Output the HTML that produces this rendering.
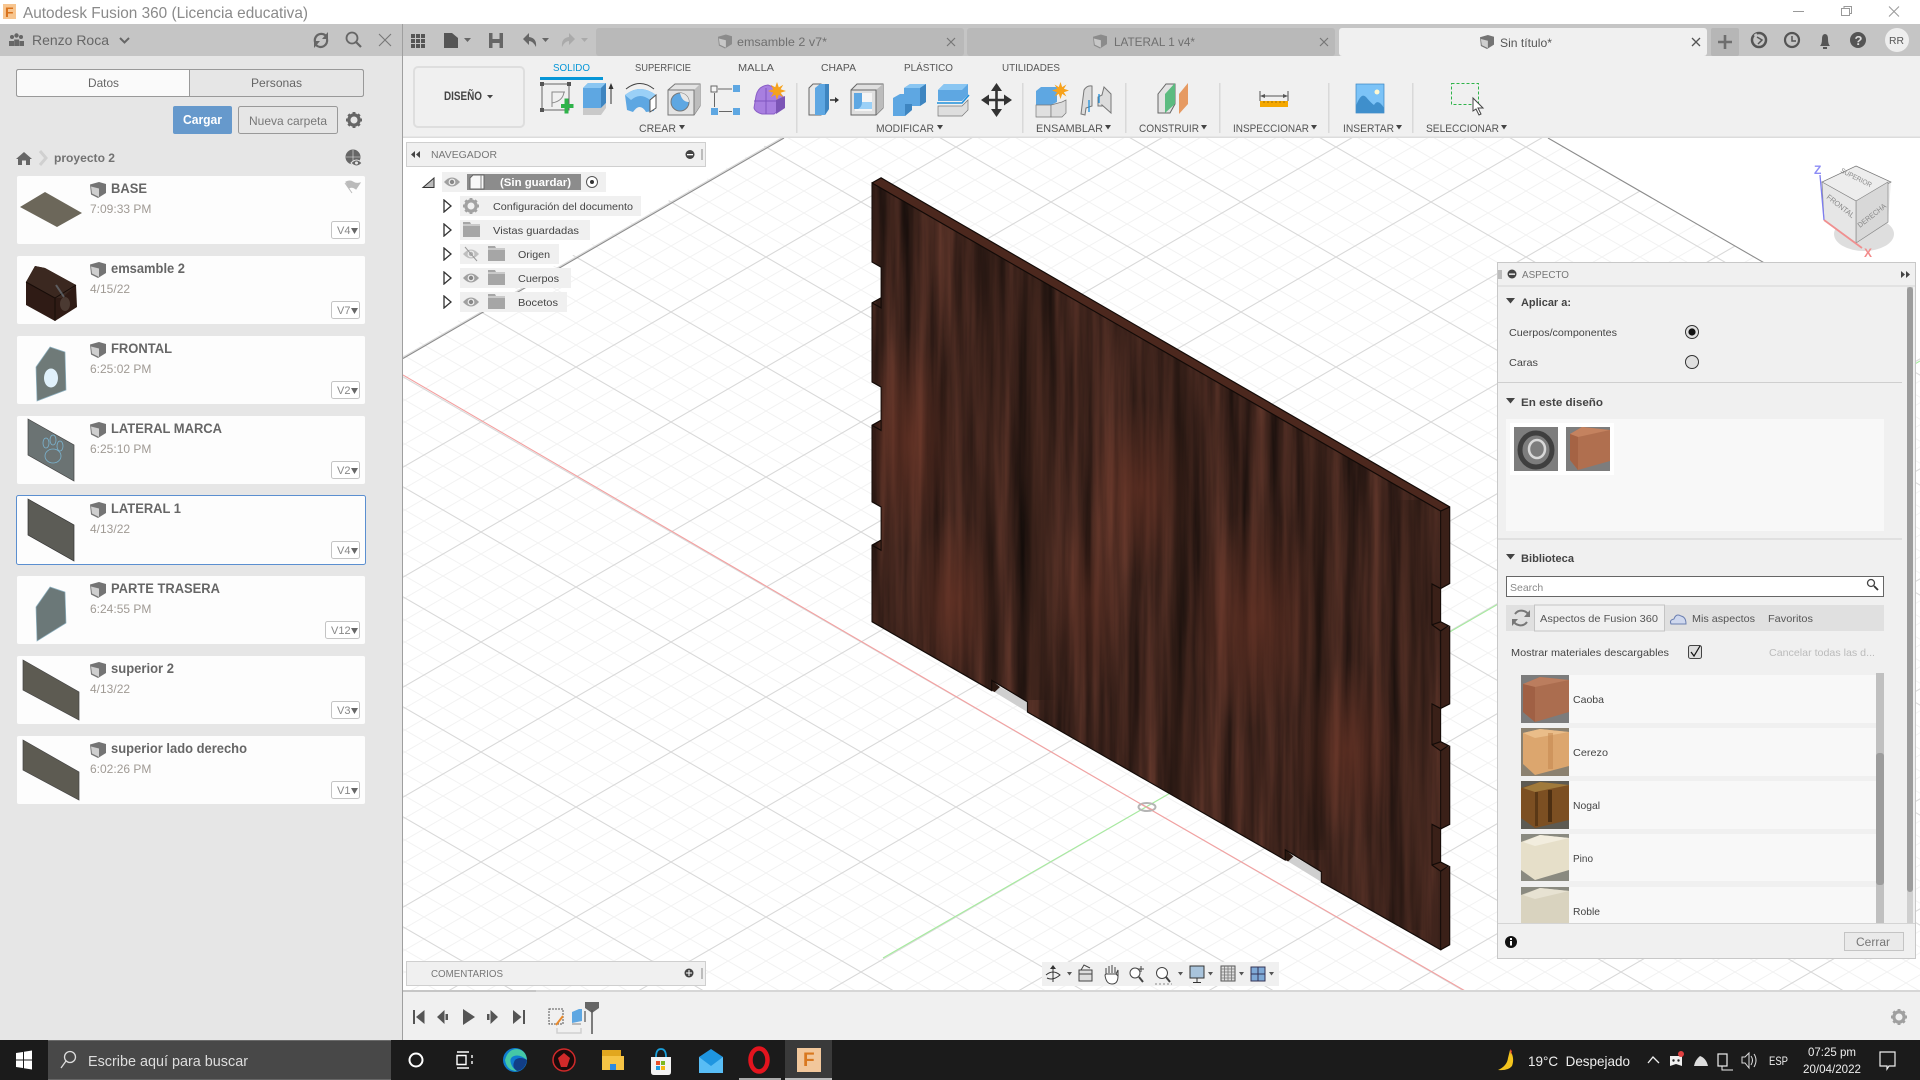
<!DOCTYPE html>
<html lang="es"><head><meta charset="utf-8"><title>Autodesk Fusion 360</title>
<style>
html,body{margin:0;padding:0;background:#fff;overflow:hidden}
svg{display:block}
text{font-family:"Liberation Sans",sans-serif;white-space:pre}
.g{fill:#666}.l{fill:#777}.t{fill:#555}
</style></head><body>
<svg xmlns="http://www.w3.org/2000/svg" width="1920" height="1080" viewBox="0 0 1920 1080">
<defs>
<pattern id="grid" patternUnits="userSpaceOnUse" x="1146" y="807" width="190" height="110">
<g stroke="#f2f2f2" stroke-width="1" fill="none">
<path d="M0 -88L190 22M0 -66L190 44M0 -44L190 66M0 -22L190 88M0 22L190 132M0 44L190 154M0 66L190 176M0 88L190 198"/>
<path d="M0 22L190 -88M0 44L190 -66M0 66L190 -44M0 88L190 -22M0 132L190 22M0 154L190 44M0 176L190 66M0 198L190 88"/>
</g>
<g stroke="#d9d9d9" stroke-width="1.100" fill="none"><path d="M0 0L190 110M0 110L190 0"/></g>
</pattern>
<clipPath id="gridclip"><polygon points="1166,-83 3200,1095 1166,2500 -900,1095"/></clipPath>
<clipPath id="vp"><rect x="403" y="138" width="1517" height="852"/></clipPath>
<filter id="wood" x="0" y="0" width="1" height="1" color-interpolation-filters="sRGB">
<feTurbulence type="fractalNoise" baseFrequency="0.07 0.003" numOctaves="4" seed="7"/>
<feColorMatrix type="matrix" values="0 0 0 .4 .045  0 0 0 .22 .03  0 0 0 .17 .025  0 0 0 0 1"/>
</filter>
<clipPath id="woodclip"><path transform="translate(850 160) scale(.4145 .5102)" d="M53 45L1425 688V840L1404 831V911L1425 923V1075L1404 1066V1146L1425 1158V1311L1404 1302V1382L1425 1394V1548L1137 1415V1395L1050 1352V1372L428 1082V1062L342 1020V1040L53 905V755L75 745V680L53 670V520L75 510V445L53 435V280L75 270V210L53 200Z"/></clipPath>
<radialGradient id="red"><stop offset="0" stop-color="#6e3526" stop-opacity=".55"/><stop offset="1" stop-color="#6e3526" stop-opacity="0"/></radialGradient>
<linearGradient id="dk" x1="0" x2="1" y1="0" y2="0"><stop offset="0" stop-color="#1d120d" stop-opacity="0"/><stop offset=".5" stop-color="#1d120d" stop-opacity=".4"/><stop offset="1" stop-color="#1d120d" stop-opacity="0"/></linearGradient>
<symbol id="cube" viewBox="0 0 16 16" overflow="visible"><path d="M0 2.5L9 0L16 2V11L8 16L1 12.5Z" fill="#747474"/><path d="M1 4.5L9 6.5V15L2 11.5Z" fill="#cfcfcf"/></symbol>
<symbol id="star" viewBox="-10 -10 20 20"><path d="M0 -10L2 -4L7 -7L4 -2L10 0L4 2L7 7L2 4L0 10L-2 4L-7 7L-4 2L-10 0L-4 -2L-7 -7L-2 -4Z" fill="#f7a21b"/></symbol>
<symbol id="folder" viewBox="0 0 17 15"><path d="M0 0H7L8 2H17V15H0Z" fill="#a6a6a6"/><path d="M0 3H17" stroke="#eee" stroke-width="1"/></symbol>
<symbol id="eye" viewBox="0 0 16 10"><path d="M0 5Q8 -4 16 5Q8 14 0 5Z" fill="#a0a0a0"/><circle cx="8" cy="5" r="3.4" fill="#eee"/><circle cx="8" cy="5" r="2.2" fill="#888"/></symbol>
<symbol id="gear" viewBox="-10 -10 20 20"><circle r="6.4" fill="none" stroke="currentColor" stroke-width="4"/><path d="M-1.8 -10H1.8V-6H-1.8ZM-1.8 6H1.8V10H-1.8ZM-10 -1.8H-6V1.8H-10ZM6 -1.8H10V1.8H6ZM-8.3 -5.8L-5.8 -8.3L-3.2 -5.6L-5.6 -3.2ZM5.8 8.3L8.3 5.8L5.6 3.2L3.2 5.6ZM8.3 -5.8L5.8 -8.3L3.2 -5.6L5.6 -3.2ZM-5.8 8.3L-8.3 5.8L-5.6 3.2L-3.2 5.6Z" fill="currentColor"/></symbol>
<symbol id="exp" viewBox="0 0 9 14"><path d="M1 1L8 7L1 13Z" fill="#fff" stroke="#333" stroke-width="1.3"/></symbol>
</defs>

<!-- title bar -->
<rect width="1920" height="24" fill="#fff"/>
<rect x="3" y="4" width="13" height="15" fill="#f7c58f"/><text x="5" y="17" font-size="14" font-weight="bold" fill="#d9721c">F</text>
<text x="23" y="18" font-size="16" fill="#8a8a8a" textLength="285" lengthAdjust="spacingAndGlyphs">Autodesk Fusion 360 (Licencia educativa)</text>
<path d="M1793 11.5H1804" stroke="#999"/>
<path d="M1841.5 8.5H1849.5V15.5H1841.5ZM1844 8.5V6.5H1851.5V13.5H1849.5" fill="none" stroke="#999"/>
<path d="M1889 6.5L1899 16.5M1899 6.5L1889 16.5" stroke="#999"/>

<!-- top row -->
<rect y="24" width="1920" height="32" fill="#c5c5c5"/>
<rect x="596" y="28" width="368" height="28" rx="3" fill="#b9b9b9"/>
<rect x="967" y="28" width="368" height="28" rx="3" fill="#b9b9b9"/>
<rect x="1339" y="28" width="368" height="28" rx="3" fill="#f0f0f0"/>
<use href="#cube" x="718" y="34" width="14" height="15" opacity=".65"/>
<text x="737" y="46" font-size="12" fill="#6f6f6f" textLength="90" lengthAdjust="spacingAndGlyphs">emsamble 2 v7*</text>
<path d="M947 38L955 46M955 38L947 46" stroke="#777" stroke-width="1.2"/>
<use href="#cube" x="1093" y="34" width="14" height="15" opacity=".65"/>
<text x="1114" y="46" font-size="12" fill="#6f6f6f" textLength="81" lengthAdjust="spacingAndGlyphs">LATERAL 1 v4*</text>
<path d="M1320 38L1328 46M1328 38L1320 46" stroke="#777" stroke-width="1.2"/>
<use href="#cube" x="1480" y="34" width="14" height="16"/>
<text x="1500" y="47" font-size="12" fill="#555" textLength="52" lengthAdjust="spacingAndGlyphs">Sin título*</text>
<path d="M1692 38L1700 46M1700 38L1692 46" stroke="#555" stroke-width="1.3"/>
<rect x="1711" y="28" width="28" height="28" rx="2" fill="#b6b6b6"/>
<path d="M1725 35V49M1718 42H1732" stroke="#6e6e6e" stroke-width="2.6"/>
<circle cx="1759" cy="40" r="7" fill="none" stroke="#555" stroke-width="2.5"/><path d="M1755 34L1759 40L1755 43" stroke="#c5c5c5" stroke-width="3" fill="none"/><path d="M1757 37L1762 40L1758 44" stroke="#555" stroke-width="1.500" fill="none"/>
<circle cx="1792" cy="40" r="7" fill="#c5c5c5" stroke="#555" stroke-width="2.2"/><path d="M1792 36V41H1796" stroke="#555" stroke-width="1.5" fill="none"/>
<path d="M1820 46Q1822 44 1822 39Q1822 34 1825 34Q1828 34 1828 39Q1828 44 1830 46Z M1823 47H1827V49H1823Z" fill="#555"/>
<circle cx="1858" cy="40" r="8" fill="#555"/><text x="1854.5" y="45" font-size="13" font-weight="bold" fill="#ddd">?</text>
<circle cx="1897" cy="40" r="12" fill="#eee"/><text x="1889" y="44" font-size="10" fill="#555" textLength="15" lengthAdjust="spacingAndGlyphs">RR</text>
<path d="M411 34h4v4h-4zM416 34h4v4h-4zM411 39h4v4h-4zM416 39h4v4h-4zM411 44h4v4h-4zM416 44h4v4h-4zM421 34h4v4h-4zM421 39h4v4h-4zM421 44h4v4h-4z" fill="#555"/>
<path d="M444 33H452L458 38V48H444Z" fill="#555"/><path d="M464 38H471L467.5 42Z" fill="#666"/>
<path d="M489 33H503V48H489Z" fill="#666"/><path d="M492.5 33V39H499.5V33M492.5 48V43H499.5V48" fill="#c5c5c5"/>
<path d="M523 39L529 33V37Q537 38 536 47Q533 41 529 41V45Z" fill="#666"/><path d="M542 38H549L545.500 42Z" fill="#666"/>
<path d="M575 39L569 33V37Q561 38 562 47Q565 41 569 41V45Z" fill="#aaa"/><path d="M581 38H588L584.500 42Z" fill="#aaa"/>

<!-- left panel -->
<rect y="56" width="402" height="984" fill="#e6e6e6"/>
<rect x="402" y="24" width="1" height="1016" fill="#9f9f9f"/>
<g fill="#666"><circle cx="12" cy="37" r="2"/><circle cx="16.500" cy="35.500" r="2.200"/><circle cx="21" cy="37" r="2"/><path d="M9 41h5v5H9zM14.200 39.500h5V46h-5zM19.500 41h4.500v5h-4.500z"/></g>
<text x="32" y="45" font-size="14" class="g" textLength="77" lengthAdjust="spacingAndGlyphs">Renzo Roca</text>
<path d="M120 38L124.500 42.500L129 38" stroke="#666" stroke-width="2" fill="none"/>
<path d="M315 42A6.500 6.500 0 0 1 326.500 36.500M327 39A6.500 6.500 0 0 1 316 45" stroke="#666" stroke-width="2.200" fill="none"/><path d="M328 32V39H322ZM314 48V41H320Z" fill="#666"/>
<circle cx="352" cy="38" r="5.500" fill="none" stroke="#666" stroke-width="1.800"/><path d="M356 42L361 47" stroke="#666" stroke-width="2.200"/>
<path d="M379 34L391 46M391 34L379 46" stroke="#777" stroke-width="1.100"/>
<rect x="16.500" y="69.500" width="347" height="27" rx="2" fill="#e6e6e6" stroke="#999"/>
<path d="M17 71.500Q17 70 19 70H189.500V96H19Q17 96 17 94.500Z" fill="#fafafa"/>
<path d="M189.500 69.500V96.500" stroke="#999"/>
<rect x="16.500" y="69.500" width="347" height="27" rx="2" fill="none" stroke="#999"/>
<text x="88" y="87" font-size="12" class="g" textLength="31" lengthAdjust="spacingAndGlyphs">Datos</text>
<text x="251" y="87" font-size="12" class="g" textLength="51" lengthAdjust="spacingAndGlyphs">Personas</text>
<rect x="173" y="106" width="59" height="28" rx="2" fill="#6699cc"/>
<text x="183" y="124" font-size="12.500" font-weight="bold" fill="#fff" textLength="39" lengthAdjust="spacingAndGlyphs">Cargar</text>
<rect x="238.500" y="106.500" width="99" height="27" rx="2" fill="#e6e6e6" stroke="#999"/>
<text x="249" y="125" font-size="12" fill="#777" textLength="78" lengthAdjust="spacingAndGlyphs">Nueva carpeta</text>
<use href="#gear" x="346" y="112" width="16" height="16" color="#666"/>
<path d="M24 152L32 159H30V165H26V160.500H22V165H18V159H16Z" fill="#666"/>
<path d="M40 151L46 158L40 165" stroke="#d0d0d0" stroke-width="3" fill="none"/>
<text x="54" y="162" font-size="12" class="g" font-weight="bold" textLength="61" lengthAdjust="spacingAndGlyphs" opacity=".9">proyecto 2</text>
<circle cx="353" cy="157" r="7.500" fill="#666"/><path d="M346 157H360M353 150V164" stroke="#e6e6e6" stroke-width=".6" fill="none"/>
<path d="M351 163Q356.500 157 362 163Q356.500 169 351 163Z" fill="#666" stroke="#e6e6e6"/><circle cx="356.500" cy="163" r="1.500" fill="#e6e6e6"/>

<!-- cards -->
<g fill="#fdfdfd">
<rect x="17" y="176" width="348" height="68" rx="2"/><rect x="17" y="256" width="348" height="68" rx="2"/><rect x="17" y="336" width="348" height="68" rx="2"/><rect x="17" y="416" width="348" height="68" rx="2"/>
<rect x="16.500" y="495.500" width="349" height="69" rx="2" stroke="#5b8fd0" stroke-width="1"/><rect x="17" y="576" width="348" height="68" rx="2"/><rect x="17" y="656" width="348" height="68" rx="2"/><rect x="17" y="736" width="348" height="68" rx="2"/>
</g>
<g>
<polygon points="20,207 45,192 82,213 57,227" fill="#6c675a"/>
<polygon points="26,282 35,266 45,268 76,285 77,307 55,321 26,305" fill="#2f1b15"/>
<polygon points="35,266 45,268 76,285 62,298 55,298 26,282" fill="#3b2820"/>
<path d="M26 282L55 298L55 321M55 298L76 285" stroke="#160c08" fill="none"/>
<ellipse cx="65" cy="304" rx="5" ry="7" fill="#4b3a32"/><path d="M56 285l8 12" stroke="#7d93a0" stroke-width="2" opacity=".5"/>
<polygon points="50,347 65,352 66,390 37,401 36,367" fill="#6f7a78" stroke="#8cb0c0" stroke-width=".7"/><ellipse cx="51" cy="378" rx="7" ry="9.500" fill="#e0f1fb"/>
<polygon points="28,419 74,445 74,481 28,455" fill="#6b7373" stroke="#444" stroke-width=".7"/>
<g fill="none" stroke="#7ab3cf" stroke-width=".8"><ellipse cx="53" cy="456" rx="8" ry="7"/><ellipse cx="46" cy="443" rx="3" ry="5"/><ellipse cx="53" cy="440" rx="3" ry="5"/><ellipse cx="60" cy="446" rx="3" ry="5"/></g>
<polygon points="28,499 74,525 74,561 28,535" fill="#5c5c56" stroke="#333" stroke-width=".7"/>
<polygon points="50,587 65,592 66,623 37,641 36,607" fill="#6b7878" stroke="#8cb0c0" stroke-width=".7"/>
<polygon points="23,660 79,692 79,720 23,690" fill="#5d5b52" stroke="#444" stroke-width=".7"/>
<polygon points="23,740 79,772 79,800 23,770" fill="#5d5b52" stroke="#444" stroke-width=".7"/>
</g>
<g>
<use href="#cube" x="90" y="182" width="16" height="16"/><use href="#cube" x="90" y="262" width="16" height="16"/><use href="#cube" x="90" y="342" width="16" height="16"/><use href="#cube" x="90" y="422" width="16" height="16"/><use href="#cube" x="90" y="502" width="16" height="16"/><use href="#cube" x="90" y="582" width="16" height="16"/><use href="#cube" x="90" y="662" width="16" height="16"/><use href="#cube" x="90" y="742" width="16" height="16"/>
</g>
<g font-size="13.500" font-weight="bold" fill="#666">
<text x="111" y="193" textLength="36" lengthAdjust="spacingAndGlyphs">BASE</text>
<text x="111" y="273" textLength="74" lengthAdjust="spacingAndGlyphs">emsamble 2</text>
<text x="111" y="353" textLength="61" lengthAdjust="spacingAndGlyphs">FRONTAL</text>
<text x="111" y="433" textLength="111" lengthAdjust="spacingAndGlyphs">LATERAL MARCA</text>
<text x="111" y="513" textLength="70" lengthAdjust="spacingAndGlyphs">LATERAL 1</text>
<text x="111" y="593" textLength="109" lengthAdjust="spacingAndGlyphs">PARTE TRASERA</text>
<text x="111" y="673" textLength="63" lengthAdjust="spacingAndGlyphs">superior 2</text>
<text x="111" y="753" textLength="136" lengthAdjust="spacingAndGlyphs">superior lado derecho</text>
</g>
<g font-size="12" fill="#a09a94">
<text x="90" y="213">7:09:33 PM</text><text x="90" y="293">4/15/22</text><text x="90" y="373">6:25:02 PM</text><text x="90" y="453">6:25:10 PM</text><text x="90" y="533">4/13/22</text><text x="90" y="613">6:24:55 PM</text><text x="90" y="693">4/13/22</text><text x="90" y="773">6:02:26 PM</text>
</g>
<path d="M345 183L352 193M346 182Q350 180 353 182Q356 184 360 183L356 189Q352 186 349 188Z" fill="#bbb" stroke="#bbb"/>
<g fill="#fff" stroke="#c4c4c4">
<rect x="331.500" y="221.500" width="28" height="17" rx="2"/><rect x="331.500" y="301.500" width="28" height="17" rx="2"/><rect x="331.500" y="381.500" width="28" height="17" rx="2"/><rect x="331.500" y="461.500" width="28" height="17" rx="2"/><rect x="331.500" y="541.500" width="28" height="17" rx="2"/><rect x="325.500" y="621.500" width="34" height="17" rx="2"/><rect x="331.500" y="701.500" width="28" height="17" rx="2"/><rect x="331.500" y="781.500" width="28" height="17" rx="2"/>
</g>
<g font-size="11" fill="#888">
<text x="337" y="234">V4</text><text x="337" y="314">V7</text><text x="337" y="394">V2</text><text x="337" y="474">V2</text><text x="337" y="554">V4</text><text x="331" y="634">V12</text><text x="337" y="714">V3</text><text x="337" y="794">V1</text>
</g>
<g fill="#666">
<path d="M351 228h7l-3.500 6zM351 308h7l-3.500 6zM351 388h7l-3.500 6zM351 468h7l-3.500 6zM351 548h7l-3.500 6zM351 628h7l-3.500 6zM351 708h7l-3.500 6zM351 788h7l-3.500 6z"/>
</g>

<!-- ribbon -->
<rect x="403" y="56" width="1517" height="82" fill="#f0f0f0"/>
<rect x="403" y="136.500" width="1517" height="1.500" fill="#dcdcdc"/>
<rect x="414" y="67" width="110" height="60" rx="4" fill="#f0f0f0" stroke="#dedede" stroke-width="2"/>
<text x="444" y="100" font-size="11.500" font-weight="bold" fill="#444" textLength="38" lengthAdjust="spacingAndGlyphs">DISEÑO</text><path d="M487 95h6l-3 3.500z" fill="#444"/>
<g font-size="10.500" fill="#555">
<text x="553" y="71" fill="#0696d7" textLength="37" lengthAdjust="spacingAndGlyphs">SOLIDO</text>
<text x="635" y="71" textLength="56" lengthAdjust="spacingAndGlyphs">SUPERFICIE</text>
<text x="738" y="71" textLength="36" lengthAdjust="spacingAndGlyphs">MALLA</text>
<text x="821" y="71" textLength="35" lengthAdjust="spacingAndGlyphs">CHAPA</text>
<text x="904" y="71" textLength="49" lengthAdjust="spacingAndGlyphs">PLÁSTICO</text>
<text x="1002" y="71" textLength="58" lengthAdjust="spacingAndGlyphs">UTILIDADES</text>
</g>
<rect x="540" y="77" width="63" height="3" fill="#0696d7"/>
<g font-size="11" fill="#555">
<text x="639" y="132" textLength="37" lengthAdjust="spacingAndGlyphs">CREAR</text>
<text x="876" y="132" textLength="58" lengthAdjust="spacingAndGlyphs">MODIFICAR</text>
<text x="1036" y="132" textLength="67" lengthAdjust="spacingAndGlyphs">ENSAMBLAR</text>
<text x="1139" y="132" textLength="60" lengthAdjust="spacingAndGlyphs">CONSTRUIR</text>
<text x="1233" y="132" textLength="76" lengthAdjust="spacingAndGlyphs">INSPECCIONAR</text>
<text x="1343" y="132" textLength="51" lengthAdjust="spacingAndGlyphs">INSERTAR</text>
<text x="1426" y="132" textLength="73" lengthAdjust="spacingAndGlyphs">SELECCIONAR</text>
</g>
<path d="M679 125h6l-3 4.500zM937 125h6l-3 4.500zM1105 125h6l-3 4.500zM1201 125h6l-3 4.500zM1311 125h6l-3 4.500zM1396 125h6l-3 4.500zM1501 125h6l-3 4.500z" fill="#444"/>
<g fill="#d9d9d9"><rect x="796" y="83" width="1.500" height="50"/><rect x="1022" y="83" width="1.500" height="50"/><rect x="1125" y="83" width="1.500" height="50"/><rect x="1219" y="83" width="1.500" height="50"/><rect x="1328" y="83" width="1.500" height="50"/><rect x="1412" y="83" width="1.500" height="50"/></g>

<!-- sketch icon -->
<path d="M542 84h27v26h-27z" fill="none" stroke="#666"/><g fill="#555"><rect x="540" y="82" width="4" height="4"/><rect x="567" y="82" width="4" height="4"/><rect x="540" y="108" width="4" height="4"/></g>
<path d="M552 107V92H565M552 103Q563 101 564 92" fill="none" stroke="#888"/>
<path d="M562 103h3.500v-5.500h4V103h5v4h-5v5.500h-4V107H562z" fill="#2fb34a" transform="translate(-1 1)"/>
<!-- extrude -->
<polygon points="583,88 588,83 606,83 606,103 601,108 583,108" fill="#5ea7e2"/><polygon points="583,88 588,83 606,83 601,88" fill="#8ac6f2"/><polygon points="601,88 606,83 606,103 601,108" fill="#3e85c0"/>
<polygon points="583,108 601,108 606,103 606,108 601,115 583,115" fill="#c9c9c9"/><path d="M611 85V104" stroke="#333"/><path d="M608.500 89L611 83L613.500 89Z" fill="#333"/>
<!-- revolve -->
<path d="M625 95Q640 83 656 95L654 111L646 112Q640 102 633 112L627 110Z" fill="#5ea7e2"/><path d="M625 95Q640 83 656 95L650 100Q640 92 631 100Z" fill="#9ad0f7"/><path d="M626 89Q640 78 654 89" fill="none" stroke="#444"/><path d="M650 100L656 95V108L650 112Z" fill="#fff" stroke="#555"/>
<!-- hole -->
<polygon points="668,90 675,84 700,84 700,106 694,115 668,115" fill="#e3e3e3" stroke="#777"/><polygon points="694,90 700,84 700,106 694,115" fill="#bdbdbd"/><path d="M668 90H694V115" fill="none" stroke="#777"/><circle cx="680" cy="102" r="9" fill="#5ea7e2" stroke="#777"/><path d="M680 93A9 9 0 0 1 689 102Q682 102 680 93Z" fill="#e8e8e8"/>
<!-- pattern -->
<rect x="711" y="86" width="6" height="6" fill="#f5f5f5" stroke="#666"/><rect x="733" y="85" width="7" height="7" fill="#5ea7e2"/><rect x="711" y="108" width="7" height="7" fill="#5ea7e2"/><rect x="733" y="108" width="7" height="7" fill="#5ea7e2"/><path d="M718 89H732M714.500 93V107M719 111.500H732" stroke="#666"/>
<!-- form -->
<path d="M756 96Q758 86 768 85L776 88L784 98V106L774 114H762Q755 112 754 108Z" fill="#a87fe0" stroke="#8a5ec6"/><path d="M754 101H776M766 88V114" stroke="#7f55c0"/><polygon points="776,100 785,96 785,108 776,114" fill="#7c55b6"/>
<use href="#star" x="768" y="82" width="18" height="18"/>
<!-- modify press pull -->
<path d="M809 115V88L813 84H821V115Z" fill="#e8e8e8" stroke="#666"/><polygon points="815,115 815,88 820,84 829,84 829,109 825,115" fill="#5ea7e2"/><polygon points="825,84 829,84 829,109 825,115" fill="#3e85c0"/><path d="M830 100H838" stroke="#333" stroke-width="1.500"/><path d="M835 97L839 100L835 103Z" fill="#333"/>
<!-- fillet -->
<polygon points="851,90 857,84 883,84 883,108 876,115 851,115" fill="#e0e0e0" stroke="#666"/><polygon points="876,90 883,84 883,108 876,115" fill="#bcbcbc"/><rect x="855" y="93" width="17" height="18" fill="#f5f5f5"/><path d="M854 93H862V102H872V109H854Z" fill="#5ea7e2"/><path d="M862 102H872V109H858Q862 107 862 102Z" fill="#9ad0f7"/><path d="M851 90H876V115" fill="none" stroke="#666"/>
<!-- combine -->
<polygon points="893,98 900,94 904,94 904,88 910,84 926,84 926,102 920,106 912,106 912,110 905,116 893,116" fill="#5ea7e2"/><polygon points="904,88 910,84 926,84 920,88" fill="#8ac6f2"/><polygon points="920,88 926,84 926,102 920,106" fill="#3e85c0"/><polygon points="905,104 912,104 912,110 905,116" fill="#3e85c0"/>
<!-- split -->
<polygon points="938,90 944,84 968,84 968,95 962,101 938,101" fill="#5ea7e2"/><polygon points="938,90 944,84 968,84 962,90" fill="#8ac6f2"/><path d="M937 103H962L969 95" stroke="#1f8fdb" stroke-width="1.500" fill="none"/><polygon points="938,106 962,106 968,100 968,110 962,116 938,116" fill="#dedede" stroke="#777" stroke-width=".7"/>
<!-- move -->
<path d="M996.500 88V112M984 100H1009" stroke="#333" stroke-width="2.600"/><path d="M996.500 83L1002 91H991ZM996.500 117L1002 109H991ZM981 100L989 94.500V105.500ZM1012 100L1004 94.500V105.500Z" fill="#333"/>
<!-- assemble -->
<polygon points="1036,91 1041,87 1057,87 1057,102 1051,105 1036,105" fill="#5ea7e2"/><polygon points="1036,105 1051,105 1051,117 1036,117" fill="#e0e0e0" stroke="#777" stroke-width=".7"/><polygon points="1051,105 1062,102 1066,100 1066,113 1062,117 1051,117" fill="#dcdcdc" stroke="#777" stroke-width=".7"/>
<use href="#star" x="1052" y="82" width="17" height="17"/>
<!-- joint -->
<path d="M1081 114L1084 90Q1087 85 1092 86V106L1086 108L1085 115ZM1111 113V94L1104 87L1102 95L1098 97V106H1102L1102 105Z" fill="#dcdcdc" stroke="#777"/><path d="M1089 100V112M1099 94V103" stroke="#1f8fdb" stroke-width="1.300"/>
<!-- construct -->
<polygon points="1158,94 1166,84 1175,84 1175,104 1170,113 1158,113" fill="#e3e3e3" stroke="#666"/><polygon points="1165,94 1175,83 1175,104 1165,113" fill="#5cbb80"/><polygon points="1179,94 1188,83 1188,104 1179,114" fill="#e69a62"/>
<!-- measure -->
<rect x="1260" y="101" width="28" height="6" fill="#f5a800"/><path d="M1260 91V101M1288 91V101M1262 96H1286" stroke="#555" fill="none"/><path d="M1260 96L1265 94V98ZM1288 96L1283 94V98Z" fill="#555"/><path d="M1264 101v2M1268 101v2M1272 101v2M1276 101v2M1280 101v2M1284 101v2" stroke="#a36f00"/>
<!-- insert -->
<rect x="1356" y="84" width="28" height="29" fill="#7cc3f7" stroke="#3a85c0" stroke-width=".7"/><circle cx="1377" cy="92" r="2.500" fill="#fff8d0"/><path d="M1356 106Q1361 92 1366 97Q1371 103 1374 105Q1378 98 1384 108V113H1356Z" fill="#3f8fcc"/>
<!-- select -->
<rect x="1451.500" y="83.500" width="27" height="21" fill="none" stroke="#2fb34a" stroke-dasharray="3 2"/>
<path d="M1473 98L1473 111L1476 109L1479 115L1481 114L1478 108L1483 108Z" fill="#fff" stroke="#444"/>

<!-- viewport -->
<g clip-path="url(#vp)">
<rect x="403" y="138" width="1517" height="852" fill="#fff"/>
<g clip-path="url(#gridclip)"><rect x="403" y="138" width="1517" height="852" fill="url(#grid)"/></g>
<path d="M784 138L403 358.500M1548 138L1780 272" stroke="#8c8c8c" stroke-width="1.100" fill="none"/>
<path d="M403 375L1146 807L1467 992" stroke="#f4a0a0" stroke-width="1.100" fill="none"/>
<path d="M883 958L1146 807L1920 361" stroke="#a6ec9e" stroke-width="1.100" fill="none"/>
<ellipse cx="1147" cy="807" rx="8.500" ry="4" fill="none" stroke="#b5b5b5" stroke-width="2"/><path d="M1141 804L1153 810" stroke="#e9a0a0"/>
<g transform="translate(850 160) scale(.4145 .5102)">
<polygon points="349,1043 362,1033 428,1062 428,1082" fill="#cfcfcf"/>
<polygon points="342,1020 362,1033 349,1043 342,1040" fill="#2a1811"/>
<polygon points="1057,1375 1070,1365 1137,1395 1137,1415" fill="#cfcfcf"/>
<polygon points="1050,1352 1070,1365 1057,1375 1050,1372" fill="#2a1811"/>
<!-- top face -->
<polygon points="53,45 75,35 1447,680 1425,688" fill="#4c281e"/>
<!-- right thickness -->
<path d="M1425 688L1447 680V830L1425 840Z M1425 923L1447 913V1066L1425 1075Z M1425 1158L1447 1148V1302L1425 1311Z M1425 1394L1447 1384V1538L1425 1548Z" fill="#3a2018"/>
<path d="M1404 831L1425 840V905L1404 911Z M1404 1066L1425 1075V1140L1404 1146Z M1404 1302L1425 1311V1376L1404 1382Z" fill="#3a2018"/>
<path d="M1404 911L1425 905L1444 913L1425 923Z M1404 1146L1425 1140L1444 1148L1425 1158Z M1404 1382L1425 1376L1444 1384L1425 1394Z" fill="#43251b"/>
</g>
<g clip-path="url(#woodclip)">
<rect x="868" y="174" width="590" height="780" fill="#3f2720" filter="url(#wood)"/>
<ellipse cx="1256" cy="619" rx="70" ry="110" fill="url(#red)"/>
<ellipse cx="908" cy="440" rx="50" ry="110" fill="url(#red)"/>
<ellipse cx="1140" cy="490" rx="55" ry="90" fill="url(#red)"/>
<ellipse cx="954" cy="600" rx="45" ry="90" fill="url(#red)"/>
<ellipse cx="1347" cy="750" rx="55" ry="90" fill="url(#red)"/>
<ellipse cx="1090" cy="600" rx="40" ry="100" fill="url(#red)" opacity=".6"/>
<rect x="1010" y="200" width="50" height="500" fill="url(#dk)"/>
<rect x="1160" y="300" width="36" height="600" fill="url(#dk)"/>
<rect x="975" y="190" width="30" height="500" fill="url(#dk)" opacity=".7"/>
<rect x="1295" y="400" width="40" height="450" fill="url(#dk)" opacity=".8"/>
<rect x="1395" y="500" width="35" height="430" fill="url(#dk)" opacity=".7"/>
</g>
<g transform="translate(850 160) scale(.4145 .5102)" fill="none" stroke="#120a07" stroke-width="2.400">
<path d="M53 45L1425 688V840L1404 831V911L1425 923V1075L1404 1066V1146L1425 1158V1311L1404 1302V1382L1425 1394V1548L1137 1415V1395L1050 1352V1372L428 1082V1062L342 1020V1040L53 905V755L75 745V680L53 670V520L75 510V445L53 435V280L75 270V210L53 200Z"/>
<path d="M53 45L75 35L1447 680V830L1425 840M1425 905V840M1404 911L1425 905L1444 913L1425 923M1425 1140V1075M1447 913V1066L1425 1075M1404 1146L1425 1140L1444 1148L1425 1158M1425 1376V1311M1447 1148V1302L1425 1311M1404 1382L1425 1376L1444 1384L1425 1394M1447 1384V1538L1425 1548M1425 688L1447 680M53 280L75 290V270M53 520L75 530V510M53 755L75 765V745"/>
</g>
<!-- viewcube -->
<ellipse cx="1864" cy="234" rx="30" ry="17" fill="#000" opacity=".13"/>
<polygon points="1856,166 1891,182 1888,222 1856,243 1824,220 1822,182" fill="#eee"/>
<polygon points="1856,166 1891,182 1856,201 1822,182" fill="#ededed" stroke="#777" stroke-width=".7"/>
<polygon points="1856,201 1888,182 1888,222 1856,243" fill="#d8d8d8" stroke="#888" stroke-width=".7"/>
<polygon points="1822,182 1856,201 1856,243 1824,220" fill="#e6e6e6" stroke="#888" stroke-width=".7"/>
<text x="0" y="0" font-size="7" fill="#888" transform="translate(1840 172) rotate(27)" textLength="34" lengthAdjust="spacingAndGlyphs">SUPERIOR</text>
<text x="0" y="0" font-size="7.500" fill="#888" transform="translate(1826 198) rotate(38)" textLength="33" lengthAdjust="spacingAndGlyphs">FRONTAL</text>
<text x="0" y="0" font-size="7.500" fill="#888" transform="translate(1860 228) rotate(-38)" textLength="34" lengthAdjust="spacingAndGlyphs">DERECHA</text>
<path d="M1820 175L1824 220" stroke="#7d7df0" stroke-width="1.300"/><path d="M1824 220L1862 248" stroke="#f09090" stroke-width="1.800"/>
<text x="1814" y="174" font-size="12" font-weight="bold" fill="#8c8cf5">Z</text>
<text x="1864" y="257" font-size="12" font-weight="bold" fill="#f28a8a">X</text>
</g>

<!-- navigator -->
<rect x="406.500" y="142.500" width="299" height="24" fill="#f0f0f0" stroke="#cfcfcf"/>
<path d="M416 154.500l4 -3.500v7zM411 154.500l4 -3.500v7z" fill="#444"/>
<text x="431" y="158" font-size="10.500" fill="#777" textLength="66" lengthAdjust="spacingAndGlyphs">NAVEGADOR</text>
<circle cx="690" cy="154.500" r="4.500" fill="#444"/><rect x="687" y="154" width="6" height="1.300" fill="#fff"/><path d="M702 149V160" stroke="#888"/>
<rect x="442" y="172" width="164" height="20" fill="#f0f0f0"/>
<path d="M423 187.500H434V178Z" fill="#bbb" stroke="#333"/>
<use href="#eye" x="444" y="177" width="16" height="10"/>
<rect x="467" y="174" width="114" height="16" fill="#8c8c8c"/>
<path d="M470 178L473 175H484V189H470Z" fill="#f7f7f7" stroke="#666"/><path d="M481 175V189" stroke="#888"/>
<text x="500" y="186" font-size="11" font-weight="bold" fill="#fff" textLength="71" lengthAdjust="spacingAndGlyphs">(Sin guardar)</text>
<circle cx="592" cy="182" r="5.500" fill="#fff" stroke="#555"/><circle cx="592" cy="182" r="2" fill="#333"/>
<g fill="#f0f0f0"><rect x="460" y="196" width="181" height="20"/><rect x="460" y="220" width="130" height="20"/><rect x="460" y="244" width="99" height="20"/><rect x="460" y="268" width="111" height="20"/><rect x="460" y="292" width="107" height="20"/></g>
<use href="#exp" x="443" y="199" width="9" height="14"/><use href="#exp" x="443" y="223" width="9" height="14"/><use href="#exp" x="443" y="247" width="9" height="14"/><use href="#exp" x="443" y="271" width="9" height="14"/><use href="#exp" x="443" y="295" width="9" height="14"/>
<use href="#gear" x="463" y="198" width="16" height="16" color="#a2a2a2"/>
<use href="#folder" x="463" y="222" width="17" height="15"/>
<use href="#folder" x="488" y="246" width="17" height="15"/><use href="#folder" x="488" y="270" width="17" height="15"/><use href="#folder" x="488" y="294" width="17" height="15"/>
<use href="#eye" x="463" y="249" width="16" height="10" opacity=".6"/><path d="M465 247L477 261" stroke="#999"/>
<use href="#eye" x="463" y="273" width="16" height="10"/><use href="#eye" x="463" y="297" width="16" height="10"/>
<g font-size="10.500" fill="#444">
<text x="493" y="210" textLength="140" lengthAdjust="spacingAndGlyphs">Configuración del documento</text>
<text x="493" y="234" textLength="86" lengthAdjust="spacingAndGlyphs">Vistas guardadas</text>
<text x="518" y="258" textLength="32" lengthAdjust="spacingAndGlyphs">Origen</text>
<text x="518" y="282" textLength="41" lengthAdjust="spacingAndGlyphs">Cuerpos</text>
<text x="518" y="306" textLength="40" lengthAdjust="spacingAndGlyphs">Bocetos</text>
</g>

<!-- comments -->
<rect x="406.500" y="961.500" width="299" height="24" fill="#f0f0f0" stroke="#cfcfcf"/>
<text x="431" y="977" font-size="10.500" fill="#777" textLength="72" lengthAdjust="spacingAndGlyphs">COMENTARIOS</text>
<circle cx="689" cy="973" r="4.500" fill="#444"/><path d="M686 973h6M689 970v6" stroke="#fff"/><path d="M702 968V979" stroke="#888"/>

<!-- nav toolbar -->
<rect x="1042" y="962" width="237" height="24" fill="#f0f0f0"/>
<g fill="#555" stroke="none"><path d="M1067 972h5l-2.500 3.500zM1178 972h5l-2.500 3.500zM1208 972h5l-2.500 3.500zM1239 972h5l-2.500 3.500zM1269 972h5l-2.500 3.500z"/></g>
<path d="M1053 966V982M1046 975Q1053 969 1060 975Q1053 981 1047 978" fill="none" stroke="#333"/><path d="M1050 969L1053 965L1056 969Z" fill="#333"/>
<rect x="1079" y="970" width="13" height="11" fill="#ddd" stroke="#444"/><path d="M1079 974H1092M1081 970L1084 965L1090 968" fill="none" stroke="#444"/>
<path d="M1106 974V968M1109 973V966M1112 973V965M1115 973V967M1118 977V970L1116 974" stroke="#444" fill="none"/><path d="M1105 975Q1106 984 1112 984Q1118 984 1118 976L1116 974H1106Z" fill="#fff" stroke="#444"/>
<circle cx="1135" cy="973" r="5" fill="#fff" stroke="#444"/><path d="M1139 977L1143 982" stroke="#444" stroke-width="2"/><path d="M1141 966v6M1138 969h6" stroke="#444"/>
<circle cx="1162" cy="973" r="5.500" fill="#fff" stroke="#444"/><path d="M1166 977L1170 982" stroke="#444" stroke-width="2"/><path d="M1155 984H1172" stroke="#888" stroke-dasharray="2 2"/>
<rect x="1190" y="966" width="14" height="12" fill="#a9c4dc" stroke="#333"/><path d="M1197 978V982M1193 982.500H1201" stroke="#333"/>
<rect x="1221" y="966" width="14" height="15" fill="#ddd" stroke="#555"/><path d="M1221 969H1235M1221 972H1235M1221 975H1235M1221 978H1235M1224.500 966V981M1228 966V981M1231.500 966V981" stroke="#777" stroke-width=".8"/>
<rect x="1251" y="967" width="14" height="14" fill="#7fa9d6" stroke="#335"/><path d="M1258 967V981M1251 974H1265" stroke="#335"/>

<!-- bottom bar -->
<rect x="403" y="990" width="1517" height="50" fill="#f0f0f0"/>
<rect x="403" y="990" width="1517" height="2" fill="#d6d6d6"/>
<rect x="403" y="990" width="133" height="2" fill="#c6c6c6"/>
<g fill="#555">
<path d="M413 1010H415V1024H413ZM424.500 1010V1024L416 1017Z"/>
<path d="M449.500 1010V1024L442 1017ZM450.500 1014H453V1020H450.500Z" transform="translate(-5 0)"/>
<path d="M463 1009L475 1017L463 1025Z"/>
<path d="M487 1014H489.500V1020H487ZM490.500 1010L498 1017L490.500 1024Z"/>
<path d="M513 1010L521.500 1017L513 1024ZM523 1010H525V1024H523Z"/>
</g>
<rect x="549" y="1009" width="14" height="15" fill="none" stroke="#555" stroke-dasharray="2 1"/><path d="M556 1025L563 1016" stroke="#e8892b" stroke-width="2"/>
<polygon points="572,1012 579,1009 582,1009 582,1021 572,1023" fill="#5ea7e2"/><rect x="572" y="1023" width="9" height="2" fill="#bbb"/><path d="M585 1011V1022" stroke="#333"/>
<path d="M557 1028V1033H581V1028" fill="none" stroke="#cfcfcf" stroke-width="1.500"/>
<path d="M585 1002H599V1008L592 1013L585 1008Z" fill="#666"/><path d="M592 1010V1034" stroke="#555" stroke-width="1.500"/>
<use href="#gear" x="1891" y="1009" width="16" height="16" color="#a0a0a0"/>

<!-- appearance panel -->
<rect x="1497.500" y="262.500" width="418" height="696" fill="#f0f0f0" stroke="#c8c8c8"/>
<path d="M1498 286H1915" stroke="#d4d4d4"/>
<path d="M1499 270V279M1501 270V279" stroke="#888"/>
<circle cx="1512" cy="274" r="4.500" fill="#444"/><rect x="1509" y="273.500" width="6" height="1.300" fill="#fff"/>
<text x="1522" y="278" font-size="10.500" fill="#777" textLength="47" lengthAdjust="spacingAndGlyphs">ASPECTO</text>
<path d="M1901 271l4 3.500l-4 3.500zM1906 271l4 3.500l-4 3.500z" fill="#444"/>
<g fill="#444"><path d="M1506 298h9l-4.500 5.500zM1506 398h9l-4.500 5.500zM1506 554h9l-4.500 5.500z"/></g>
<g font-size="11" font-weight="bold" fill="#444">
<text x="1521" y="306" textLength="50" lengthAdjust="spacingAndGlyphs">Aplicar a:</text>
<text x="1521" y="406" textLength="82" lengthAdjust="spacingAndGlyphs">En este diseño</text>
<text x="1521" y="562" textLength="53" lengthAdjust="spacingAndGlyphs">Biblioteca</text>
</g>
<g font-size="10.500" fill="#444">
<text x="1509" y="336" textLength="108" lengthAdjust="spacingAndGlyphs">Cuerpos/componentes</text>
<text x="1509" y="366" textLength="29" lengthAdjust="spacingAndGlyphs">Caras</text>
</g>
<circle cx="1692" cy="332" r="6.500" fill="#e0e0e0" stroke="#333"/><circle cx="1692" cy="332" r="3.600" fill="#111"/>
<circle cx="1692" cy="362" r="6.500" fill="#e0e0e0" stroke="#333"/>
<path d="M1498 382.500H1902M1498 539H1902" stroke="#cfcfcf"/>
<rect x="1506" y="419" width="378" height="112" fill="#f8f8f8"/>
<rect x="1510" y="423" width="104" height="52" fill="#fff"/>
<rect x="1514" y="427" width="44" height="44" fill="#7d7d7d"/><ellipse cx="1536" cy="450" rx="16" ry="17" fill="none" stroke="#3f3f3f" stroke-width="5"/><ellipse cx="1537" cy="449" rx="8" ry="9" fill="none" stroke="#d9d9d9" stroke-width="2.500"/>
<rect x="1566" y="427" width="44" height="44" fill="#7d7d7d"/><polygon points="1570,434 1582,427 1610,430 1610,461 1578,470 1570,460" fill="#b06f4f"/><polygon points="1570,434 1582,427 1610,430 1578,437" fill="#c4825f"/><polygon points="1570,434 1578,437 1578,470 1570,460" fill="#a56344"/>
<rect x="1506.500" y="576.500" width="377" height="20" fill="#fff" stroke="#666"/>
<text x="1510" y="591" font-size="10.500" fill="#8a8a8a">Search</text>
<circle cx="1871" cy="583" r="3.500" fill="none" stroke="#444" stroke-width="1.300"/><path d="M1874 586L1878 590" stroke="#333" stroke-width="1.800"/>
<rect x="1506" y="605" width="378" height="26" fill="#e0e0e0"/>
<rect x="1534.500" y="605" width="130" height="26" fill="#f0f0f0" stroke="#c4c4c4"/>
<path d="M1529 616A8 8 0 0 0 1515 614M1513 620A8 8 0 0 0 1527 622" stroke="#777" stroke-width="2" fill="none"/><path d="M1530 610V617H1524ZM1512 626V619H1518Z" fill="#777"/>
<text x="1540" y="622" font-size="10.500" fill="#555" textLength="118" lengthAdjust="spacingAndGlyphs">Aspectos de Fusion 360</text>
<path d="M1671 624Q1669 620 1674 619Q1676 613 1681 616Q1686 617 1686 624Z" fill="#cfd8ee" stroke="#6b7fb0"/>
<text x="1692" y="622" font-size="10.500" fill="#555" textLength="63" lengthAdjust="spacingAndGlyphs">Mis aspectos</text>
<text x="1768" y="622" font-size="10.500" fill="#555" textLength="45" lengthAdjust="spacingAndGlyphs">Favoritos</text>
<text x="1511" y="656" font-size="10.500" fill="#444" textLength="158" lengthAdjust="spacingAndGlyphs">Mostrar materiales descargables</text>
<rect x="1688.500" y="645.500" width="13" height="13" rx="2" fill="#ddd" stroke="#444"/><path d="M1691 652L1694 656L1700 646" fill="none" stroke="#111" stroke-width="1.200"/>
<text x="1769" y="656" font-size="10.500" fill="#bbb" textLength="106" lengthAdjust="spacingAndGlyphs">Cancelar todas las d...</text>
<g fill="#f8f8f8"><rect x="1521" y="675" width="355" height="48"/><rect x="1521" y="728" width="355" height="48"/><rect x="1521" y="781" width="355" height="48"/><rect x="1521" y="834" width="355" height="47"/><rect x="1521" y="887" width="355" height="36"/></g>
<g>
<rect x="1521" y="675" width="48" height="48" fill="#7c7c7c"/><polygon points="1523,684 1540,677 1569,680 1569,712 1535,722 1523,712" fill="#ab6d4f"/><polygon points="1523,684 1540,677 1569,680 1535,687" fill="#bb7d5e"/><polygon points="1523,684 1535,687 1535,722 1523,712" fill="#a06044"/>
<rect x="1521" y="728" width="48" height="48" fill="#8b8170"/><polygon points="1523,733 1540,729 1569,732 1569,766 1535,775 1523,764" fill="#dca66e"/><polygon points="1523,733 1540,729 1569,732 1535,738" fill="#eabd89"/><rect x="1548" y="733" width="5" height="36" fill="#c78b52" opacity=".6"/>
<rect x="1521" y="781" width="48" height="48" fill="#5d5a52"/><polygon points="1521,788 1540,782 1569,785 1569,820 1535,828 1521,818" fill="#7c4f22"/><polygon points="1523,788 1540,782 1569,785 1535,792" fill="#a07a3c"/><rect x="1548" y="790" width="4" height="32" fill="#4d2f12"/><rect x="1535" y="792" width="3" height="34" fill="#5a3816"/>
<rect x="1521" y="834" width="48" height="47" fill="#8a8a80"/><polygon points="1521,842 1540,835 1569,838 1569,870 1535,880 1521,870" fill="#e6dfc9"/><polygon points="1523,842 1540,835 1569,838 1535,846" fill="#f2edde"/>
<rect x="1521" y="887" width="48" height="36" fill="#8a8a80"/><polygon points="1521,895 1540,888 1569,891 1569,923 1521,923" fill="#d9d3bf"/><polygon points="1523,895 1540,888 1569,891 1535,899" fill="#e7e2d2"/>
</g>
<g font-size="10.500" fill="#444">
<text x="1573" y="703" textLength="31" lengthAdjust="spacingAndGlyphs">Caoba</text>
<text x="1573" y="756" textLength="35" lengthAdjust="spacingAndGlyphs">Cerezo</text>
<text x="1573" y="809" textLength="27" lengthAdjust="spacingAndGlyphs">Nogal</text>
<text x="1573" y="862" textLength="20" lengthAdjust="spacingAndGlyphs">Pino</text>
<text x="1573" y="915" textLength="27" lengthAdjust="spacingAndGlyphs">Roble</text>
</g>
<rect x="1876" y="673" width="8" height="250" fill="#c0c0c0"/><rect x="1876" y="753" width="8" height="132" rx="3" fill="#9c9c9c"/>
<rect x="1907" y="287" width="6" height="636" fill="#cfcfcf"/><rect x="1907" y="287" width="6" height="605" rx="3" fill="#9c9c9c"/>
<rect x="1498" y="923" width="417" height="35" fill="#f0f0f0"/><path d="M1498 923.500H1915" stroke="#d4d4d4"/>
<circle cx="1511" cy="942" r="6" fill="#111"/><rect x="1510" y="941" width="2" height="4.500" fill="#fff"/><rect x="1510" y="938" width="2" height="2" fill="#fff"/>
<rect x="1844.500" y="932.500" width="59" height="18" fill="#eaeaea" stroke="#c4c4c4"/>
<text x="1856" y="946" font-size="11.500" fill="#777" textLength="34" lengthAdjust="spacingAndGlyphs">Cerrar</text>

<!-- taskbar -->
<rect y="1040" width="1920" height="40" fill="#1b1b1b"/>
<path d="M16 1053L23 1052V1059.500H16ZM24 1051.800L32 1050.500V1059.500H24ZM16 1060.500H23V1068L16 1067ZM24 1060.500H32V1069.500L24 1068.200Z" fill="#fff"/>
<rect x="48" y="1040" width="343" height="40" fill="#484848"/><rect x="48" y="1040" width="343" height="1" fill="#6a6a6a"/><rect x="48" y="1079" width="343" height="1" fill="#666"/>
<circle cx="70" cy="1057" r="5.500" fill="none" stroke="#ddd" stroke-width="1.300"/><path d="M66 1061L61 1068" stroke="#ddd" stroke-width="1.300"/>
<text x="88" y="1066" font-size="14.500" fill="#ddd" textLength="160" lengthAdjust="spacingAndGlyphs">Escribe aquí para buscar</text>
<circle cx="416" cy="1060" r="6.500" fill="none" stroke="#fff" stroke-width="2"/>
<path d="M457 1052H469M457 1068H469M457 1055.500H466V1064.500H457ZM472 1055V1058M472 1061V1064" fill="none" stroke="#fff" stroke-width="1.400"/>
<circle cx="515" cy="1060" r="12" fill="#0f7cd0"/><path d="M505 1060Q508 1049 517 1049Q526 1050 527 1060Q520 1054 514 1056Q508 1058 512 1066Q514 1070 519 1071Q507 1072 505 1060Z" fill="#45c8a6"/><path d="M515 1060Q520 1056 527 1060Q525 1070 517 1071Q511 1067 515 1060Z" fill="#123e87"/>
<circle cx="564" cy="1060" r="11" fill="#1a0b0b" stroke="#d12a2a" stroke-width="1.500"/><path d="M558 1058L564 1053L570 1058L567 1067L561 1067Z" fill="#d12a2a"/>
<path d="M602 1054H609L611 1056H624V1070H602Z" fill="#f6c445"/><rect x="602" y="1050" width="19" height="6" fill="#e2a71f"/><rect x="610" y="1064" width="6" height="6" fill="#2d8ae0"/>
<path d="M651 1057H671V1072Q671 1075 668 1075H654Q651 1075 651 1072Z" fill="#f3f3f3"/><path d="M656 1057Q656 1049 661 1049Q666 1049 666 1057" fill="none" stroke="#19a0dc" stroke-width="1.800"/><rect x="656" y="1061" width="4" height="4" fill="#e8502a"/><rect x="661" y="1061" width="4" height="4" fill="#7db820"/><rect x="656" y="1066" width="4" height="4" fill="#1e9be0"/><rect x="661" y="1066" width="4" height="4" fill="#f5b915"/>
<path d="M699 1057L711 1049L723 1057V1073H699Z" fill="#1e95e0"/><path d="M699 1057L711 1066L723 1057V1073H699Z" fill="#58bdf5"/>
<ellipse cx="759" cy="1060" rx="8.500" ry="11.500" fill="none" stroke="#e3141e" stroke-width="4.500"/>
<rect x="785" y="1040" width="47" height="40" fill="#3a3a3a"/>
<rect x="797" y="1048" width="24" height="24" fill="#f2c79b"/><text x="803" y="1066" font-size="19" font-weight="bold" fill="#d9781f">F</text>
<rect x="739" y="1078" width="42" height="2" fill="#aaa"/><rect x="785" y="1078" width="47" height="2" fill="#bbb"/>
<path d="M1510 1050Q1515 1058 1512 1066Q1508 1071 1498 1070Q1507 1066 1508 1058Z" fill="#f3c41d"/><path d="M1510 1049l2 2-1 4z" fill="#e23b2e"/>
<text x="1528" y="1066" font-size="14" fill="#eee" textLength="102" lengthAdjust="spacingAndGlyphs">19°C  Despejado</text>
<path d="M1648 1063L1653 1057L1659 1063" fill="none" stroke="#eee" stroke-width="1.300"/>
<path d="M1670 1056H1682V1066L1676 1064L1670 1066Z" fill="#f0f0f0"/><circle cx="1681" cy="1054" r="3" fill="#e04040"/><circle cx="1673.500" cy="1060.500" r="1.200" fill="#222"/><circle cx="1678.500" cy="1060.500" r="1.200" fill="#222"/>
<path d="M1694 1066Q1695 1060 1700 1056Q1706 1058 1708 1066Z" fill="#ddd"/>
<rect x="1718" y="1054" width="9" height="12" fill="none" stroke="#eee" stroke-width="1.200"/><path d="M1722 1066V1070H1733" stroke="#eee" fill="none"/>
<path d="M1742 1057H1745L1749 1053V1068L1745 1063H1742ZM1751 1056Q1754 1060 1751 1065M1754 1054Q1758 1060 1754 1067" fill="none" stroke="#ddd"/>
<text x="1769" y="1065" font-size="12" fill="#eee" textLength="19" lengthAdjust="spacingAndGlyphs">ESP</text>
<text x="1808" y="1056" font-size="12" fill="#eee" textLength="48" lengthAdjust="spacingAndGlyphs">07:25 pm</text>
<text x="1803" y="1073" font-size="12" fill="#eee" textLength="58" lengthAdjust="spacingAndGlyphs">20/04/2022</text>
<path d="M1880 1052H1895V1066H1889L1887 1069V1066H1880Z" fill="none" stroke="#eee" stroke-width="1.200"/>
</svg>
</body></html>
